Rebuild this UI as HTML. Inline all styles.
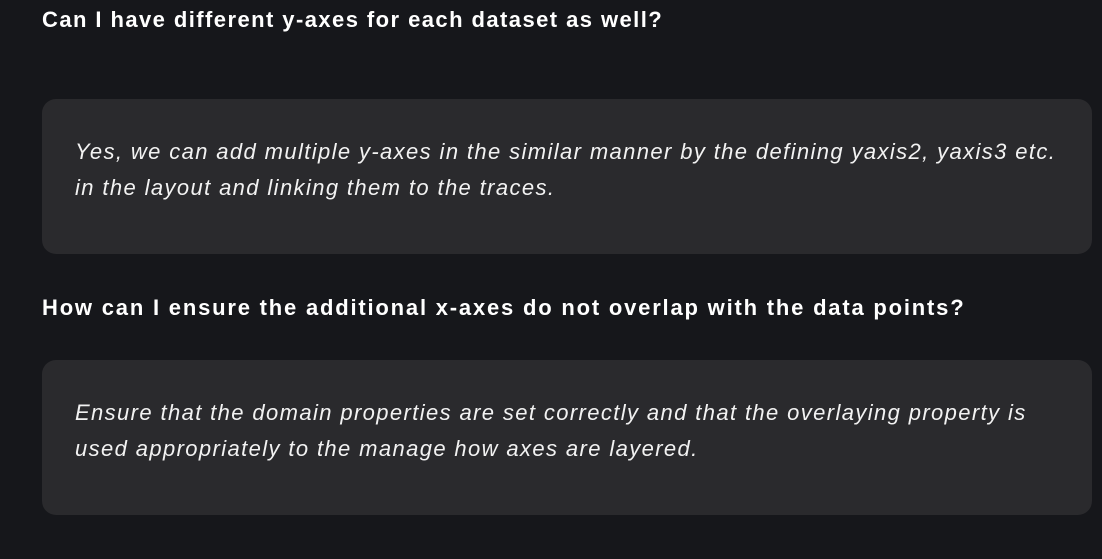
<!DOCTYPE html>
<html><head><style>
html,body{margin:0;padding:0;background:#16171b;width:1102px;height:559px;overflow:hidden}
body{font-family:"Liberation Sans",sans-serif;color:#fff;position:relative}
h3{position:absolute;left:42px;margin:0;font-size:22px;font-weight:bold;line-height:24px;white-space:nowrap;letter-spacing:1.65px}
.box{position:absolute;left:42px;width:1050px;height:155px;background:#2a2a2d;border-radius:14px}
.box p{position:absolute;left:33px;top:35px;margin:0;font-style:italic;font-size:22px;line-height:36px;color:#f2f2f2;white-space:nowrap;letter-spacing:1.38px}
</style></head><body>
<h3 style="top:8px;letter-spacing:1.43px">Can I have different y-axes for each dataset as well?</h3>
<div class="box" style="top:99px"><p>Yes, we can add multiple y-axes in the similar manner by the defining yaxis2, yaxis3 etc.<br>in the layout and linking them to the traces.</p></div>
<h3 style="top:296px;letter-spacing:1.8px">How can I ensure the additional x-axes do not overlap with the data points?</h3>
<div class="box" style="top:360px"><p>Ensure that the domain properties are set correctly and that the overlaying property is<br>used appropriately to the manage how axes are layered.</p></div>
</body></html>
